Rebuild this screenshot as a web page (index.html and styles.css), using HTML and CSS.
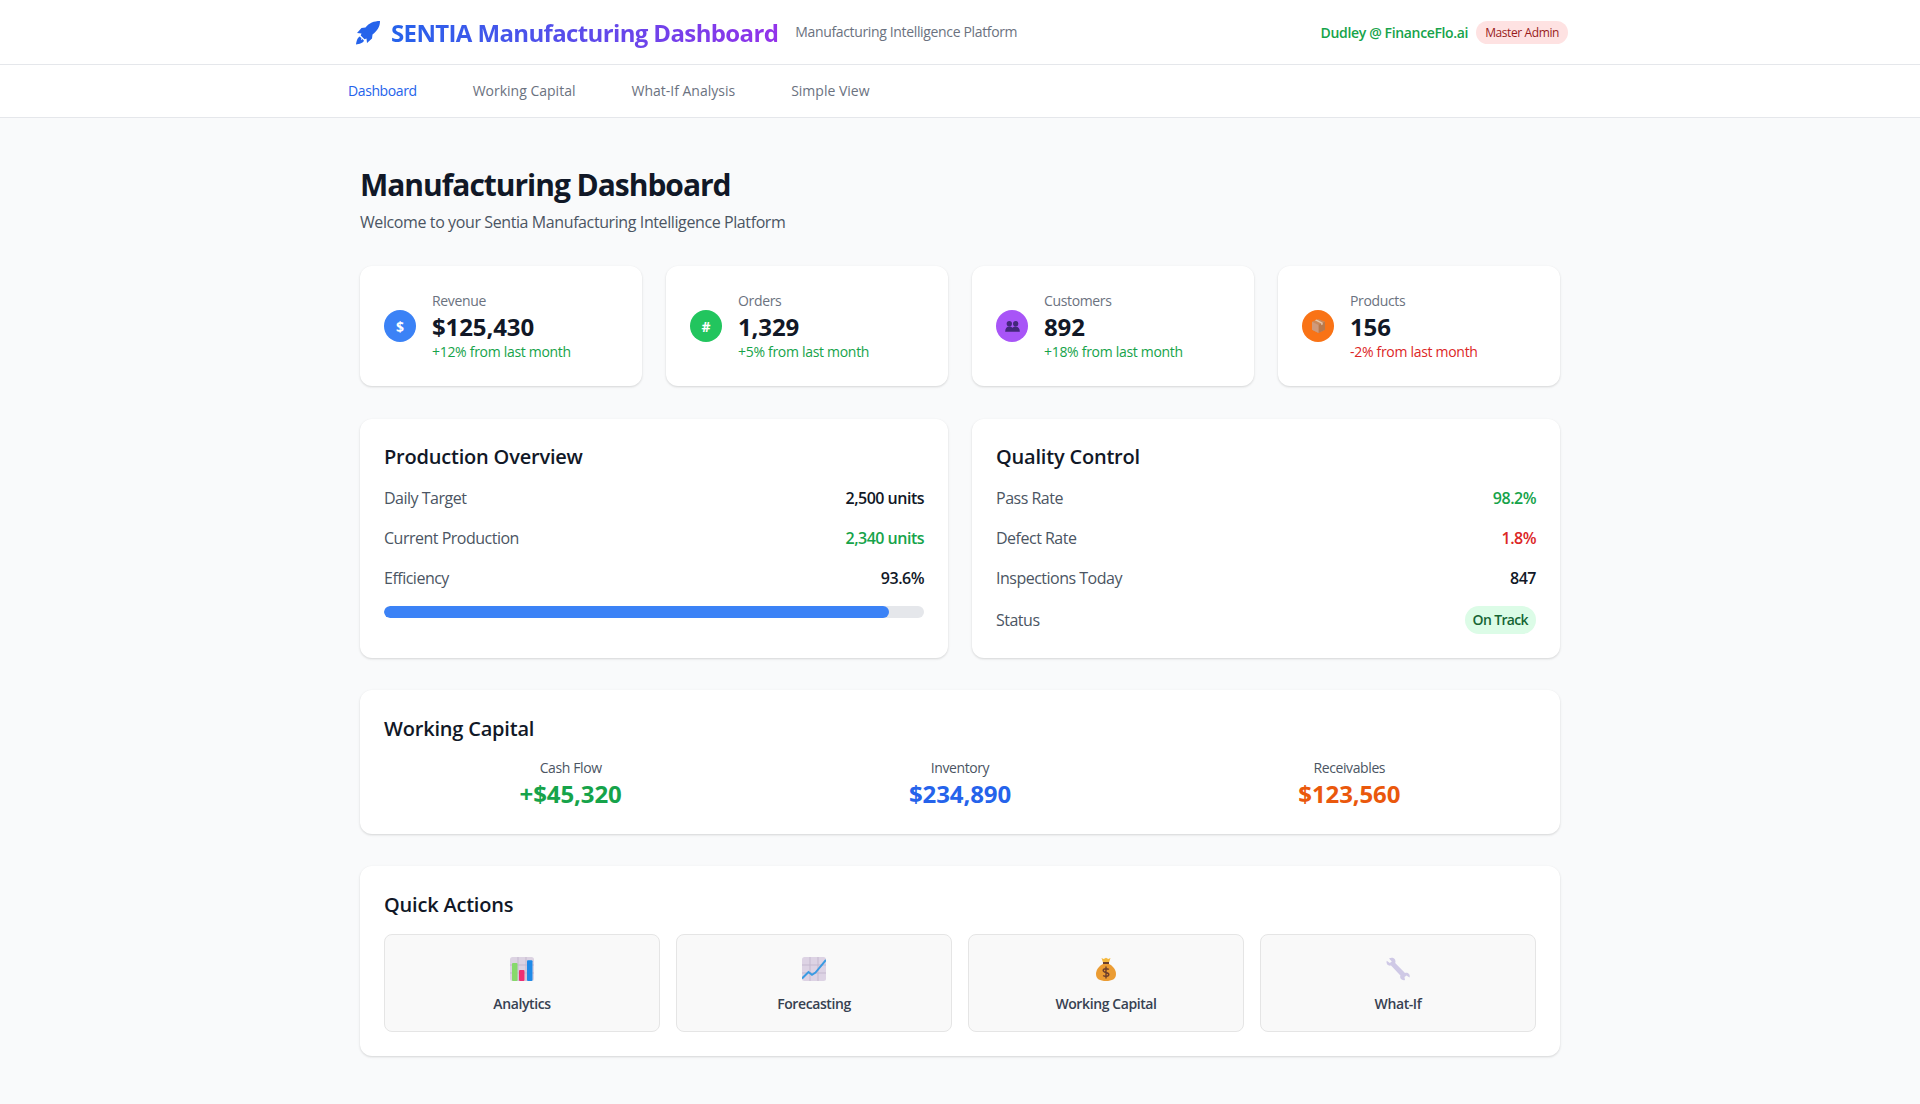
FILE: index.html
```html
<!DOCTYPE html>
<html lang="en">
<head>
    <meta charset="UTF-8">
    <title>SENTIA Manufacturing Dashboard</title>
    <link rel="stylesheet" href="styles.css">
</head>
<body>
    <header class="topbar">
        <div class="topbar-inner">
            <div class="brand">
                <svg class="rocket" viewBox="0 0 26 24"><path d="M25 0C19 0 14 2 10.500 6.500L6.500 7 2 12l4.500.5-.8 2 3.800 3.800 2-.8.500 4.500 5-4.500.5-4C22 10 25 6 25 0z"/><path d="M4.800 15.500C2.500 16.500 1.500 20 1 23.500c3.500-.5 7-1.500 8-3.800l-1.500-1.700-1.500 1.200.5-2z"/></svg>
                <span class="brand-title">SENTIA Manufacturing Dashboard</span>
                <span class="brand-sub">Manufacturing Intelligence Platform</span>
            </div>
            <div class="user">
                <span class="user-name">Dudley @ FinanceFlo.ai</span>
                <span class="user-role">Master Admin</span>
            </div>
        </div>
    </header>

    <nav class="tabs">
        <div class="tabs-inner">
            <a class="tab active">Dashboard</a>
            <a class="tab">Working Capital</a>
            <a class="tab">What-If Analysis</a>
            <a class="tab">Simple View</a>
        </div>
    </nav>

    <main class="main">
        <h1>Manufacturing Dashboard</h1>
        <p class="welcome">Welcome to your Sentia Manufacturing Intelligence Platform</p>

        <section class="stats">
            <div class="card stat">
                <div class="stat-icon blue">$</div>
                <div>
                    <div class="stat-label">Revenue</div>
                    <div class="stat-value">$125,430</div>
                    <div class="stat-change up">+12% from last month</div>
                </div>
            </div>
            <div class="card stat">
                <div class="stat-icon green">#</div>
                <div>
                    <div class="stat-label">Orders</div>
                    <div class="stat-value">1,329</div>
                    <div class="stat-change up">+5% from last month</div>
                </div>
            </div>
            <div class="card stat">
                <div class="stat-icon purple">
                    <svg width="15" height="11" viewBox="0 0 16 12" fill="#43287a"><circle cx="4.500" cy="3" r="2.900"/><circle cx="11.500" cy="3" r="2.900"/><path d="M0 11.800C0 8 2 6 4.500 6c1.400 0 2.600.5 3.500 1.300C8.900 6.500 10.100 6 11.500 6 14 6 16 8 16 11.800z"/></svg>
                </div>
                <div>
                    <div class="stat-label">Customers</div>
                    <div class="stat-value">892</div>
                    <div class="stat-change up">+18% from last month</div>
                </div>
            </div>
            <div class="card stat">
                <div class="stat-icon orange">
                    <svg width="13" height="14" viewBox="0 0 14 15"><path d="M7 0l7 3v8.500L7 15 0 11.500V3z" fill="#c98a5e"/><path d="M7 6.500L14 3v8.500L7 15z" fill="#b8794c"/><path d="M0 3l7 3.500V15L0 11.500z" fill="#cf9a7c"/><path d="M3 1.400l7 3.300v2l1.500-.7v-2L5 .6z" fill="#e6c8ac"/></svg>
                </div>
                <div>
                    <div class="stat-label">Products</div>
                    <div class="stat-value">156</div>
                    <div class="stat-change down">-2% from last month</div>
                </div>
            </div>
        </section>

        <section class="panels">
            <div class="card panel">
                <h2>Production Overview</h2>
                <div class="row"><span>Daily Target</span><b>2,500 units</b></div>
                <div class="row"><span>Current Production</span><b class="up">2,340 units</b></div>
                <div class="row"><span>Efficiency</span><b>93.6%</b></div>
                <div class="progress"><div class="progress-fill" style="width: 93.6%"></div></div>
            </div>
            <div class="card panel">
                <h2>Quality Control</h2>
                <div class="row"><span>Pass Rate</span><b class="up">98.2%</b></div>
                <div class="row"><span>Defect Rate</span><b class="down">1.8%</b></div>
                <div class="row"><span>Inspections Today</span><b>847</b></div>
                <div class="row"><span>Status</span><b class="pill">On Track</b></div>
            </div>
        </section>

        <section class="card panel capital">
            <h2>Working Capital</h2>
            <div class="capital-grid">
                <div><div class="capital-label">Cash Flow</div><div class="capital-value up">+$45,320</div></div>
                <div><div class="capital-label">Inventory</div><div class="capital-value blue-text">$234,890</div></div>
                <div><div class="capital-label">Receivables</div><div class="capital-value orange-text">$123,560</div></div>
            </div>
        </section>

        <section class="card panel actions">
            <h2>Quick Actions</h2>
            <div class="action-grid">
                <div class="action">
                    <svg class="action-icon" viewBox="0 0 24 24"><rect width="24" height="24" rx="2.500" fill="#dcd3e2"/><path d="M0 8h24M0 16h24M8 0v24M16 0v24" stroke="#c5b9cf" stroke-width="1"/><rect x="2" y="6" width="5.500" height="18" rx="1" fill="#86d96b"/><rect x="9" y="13" width="5.500" height="11" rx="1" fill="#ee2f72"/><rect x="17" y="3.300" width="5.500" height="20.700" rx="1" fill="#1f8ae8"/></svg>
                    <span>Analytics</span>
                </div>
                <div class="action">
                    <svg class="action-icon" viewBox="0 0 24 24"><rect width="24" height="24" rx="2.500" fill="#ddd3e4"/><path d="M0 8h24M0 16h24M8 0v24M16 0v24" stroke="#c5b9cf" stroke-width="1"/><path d="M0 21.500l6.500-6.500 3.500 2.800 3.500-2.200L24 3" fill="none" stroke="#3a9be2" stroke-width="2"/></svg>
                    <span>Forecasting</span>
                </div>
                <div class="action">
                    <svg class="action-icon" viewBox="0 0 24 24"><path d="M7.500 1l2.200 1L12 .8 14.300 2l2.200-1-1.500 4.500H9z" fill="#f5b93f"/><rect x="9" y="5" width="6" height="2" fill="#6a4030"/><path d="M9 7C5 9 2 13 2 17c0 5 4 7 10 7s10-2 10-7c0-4-3-8-7-10z" fill="#eb9c33"/><path d="M12 9.500v12M14.800 12.500c-1.200-1.200-5.600-1.200-5.600 1 0 2.500 5.600 1.500 5.600 4 0 2.200-4.400 2.200-5.600 1" fill="none" stroke="#6e3f2c" stroke-width="1.400"/></svg>
                    <span>Working Capital</span>
                </div>
                <div class="action">
                    <svg class="action-icon" viewBox="0 0 24 24"><path d="M3 1.500c2-1 5-1 6 1 .6 1.200.6 2.500.2 3.500l9.800 10c1.200-.4 3-.3 4 1 .8 1 1 2.500.5 3.500l-3-2-2 1.500.5 3c-1.500.5-3.300 0-4.200-1.200-.8-1.100-.8-2.300-.4-3.300L5 8.500c-1.300.3-2.800.1-3.700-1C.5 6.500.3 5 .8 3.800l3 2.200 2-1.600z" fill="#cfc9e6"/></svg>
                    <span>What-If</span>
                </div>
            </div>
        </section>
    </main>
</body>
</html>
```

FILE: styles.css
```css
* {
    box-sizing: border-box;
}

body {
    margin: 0;
    min-height: 1104px;
    background-color: #f9fafb;
    color: #111827;
    font-family: "Open Sans", "Noto Sans", sans-serif;
}

.card {
    background-color: #fff;
    border-radius: 12px;
    box-shadow: 0 1px 3px rgba(0, 0, 0, 0.1), 0 1px 2px rgba(0, 0, 0, 0.06);
}

.up {
    color: #16a34a;
}

.down {
    color: #dc2626;
}

/* header */
.topbar {
    height: 65px;
    background-color: #fff;
    border-bottom: 1px solid #e5e7eb;
}

.topbar-inner {
    width: 1216px;
    height: 64px;
    margin-left: 352px;
    padding-left: 3px;
    display: flex;
    align-items: center;
    justify-content: space-between;
}

.brand {
    display: flex;
    align-items: center;
}

.rocket {
    width: 26px;
    height: 24px;
    fill: #2563eb;
    margin: 2px 10px 0 0;
}

.brand-title {
    margin-top: 2px;
    font-size: 24px;
    font-weight: 700;
    letter-spacing: -0.63px;
    line-height: 32px;
    background: linear-gradient(90deg, #2563eb, #9333ea);
    -webkit-background-clip: text;
    background-clip: text;
    color: transparent;
}

.brand-sub {
    margin: -1px 0 0 17px;
    font-size: 14px;
    letter-spacing: -0.35px;
    color: #6b7280;
}

.user {
    display: flex;
    align-items: center;
    gap: 8px;
}

.user-name {
    font-size: 14px;
    font-weight: 600;
    letter-spacing: -0.35px;
    color: #16a34a;
}

.user-role {
    padding: 3px 9px;
    border-radius: 999px;
    background-color: #fee2e2;
    color: #991b1b;
    font-size: 12px;
    letter-spacing: -0.4px;
}

/* nav */
.tabs {
    height: 53px;
    background-color: #fff;
    border-bottom: 1px solid #e5e7eb;
}

.tabs-inner {
    margin-left: 348px;
    height: 50px;
    display: flex;
    align-items: center;
    gap: 56px;
}

.tab {
    font-size: 14px;
    font-weight: 500;
    color: #6b7280;
}

.tab.active {
    letter-spacing: -0.4px;
    color: #2563eb;
}

/* main */
.main {
    width: 1200px;
    margin: 0 auto;
    padding-top: 49px;
}

h1 {
    margin: 0;
    font-size: 30px;
    font-weight: 700;
    line-height: 36px;
    letter-spacing: -1.03px;
}

.welcome {
    margin: 7px 0 0;
    font-size: 16px;
    line-height: 24px;
    letter-spacing: -0.4px;
    color: #4b5563;
}

.stats {
    display: grid;
    grid-template-columns: repeat(4, 1fr);
    gap: 24px;
    margin-top: 32px;
}

.stat {
    height: 120px;
    padding: 0 24px;
    display: flex;
    align-items: center;
    gap: 16px;
}

.stat-icon {
    width: 32px;
    height: 32px;
    border-radius: 50%;
    display: flex;
    align-items: center;
    justify-content: center;
    color: #fff;
    font-size: 14px;
    font-weight: 700;
}

.stat-icon.blue {
    background-color: #3b82f6;
}

.stat-icon.green {
    background-color: #22c55e;
}

.stat-icon.purple {
    background-color: #a855f7;
}

.stat-icon.orange {
    background-color: #f97316;
}

.stat-label {
    margin-top: -1px;
    font-size: 14px;
    font-weight: 500;
    line-height: 20px;
    letter-spacing: -0.35px;
    color: #6b7280;
}

.stat-value {
    font-size: 24px;
    font-weight: 700;
    line-height: 32px;
    letter-spacing: -0.1px;
}

.stat-change {
    font-size: 14px;
    line-height: 18px;
    letter-spacing: -0.3px;
}

.panels {
    display: grid;
    grid-template-columns: repeat(2, 1fr);
    gap: 24px;
    margin-top: 33px;
}

.panel {
    padding: 24px;
}

h2 {
    margin: 0 0 15px;
    font-size: 20px;
    font-weight: 600;
    line-height: 28px;
    letter-spacing: -0.2px;
}

.row {
    display: flex;
    align-items: center;
    justify-content: space-between;
    min-height: 24px;
    margin-bottom: 16px;
    font-size: 16px;
    letter-spacing: -0.5px;
    color: #4b5563;
}

.row:last-child {
    margin-bottom: 0;
}

.row b {
    font-weight: 600;
    color: #111827;
}

.row b.up {
    color: #16a34a;
}

.row b.down {
    color: #dc2626;
}

.row b.pill {
    padding: 4px 8px;
    border-radius: 999px;
    background-color: #dcfce7;
    color: #166534;
    font-size: 14px;
    line-height: 20px;
    letter-spacing: -0.65px;
}

.progress {
    height: 12px;
    border-radius: 6px;
    background-color: #e5e7eb;
    overflow: hidden;
}

.progress-fill {
    height: 100%;
    border-radius: 6px;
    background-color: #3b82f6;
}

.capital {
    margin-top: 32px;
    padding-top: 25px;
    height: 144px;
}

.capital-grid {
    display: grid;
    grid-template-columns: repeat(3, 1fr);
    gap: 16px;
    text-align: center;
}

.capital-label {
    font-size: 14px;
    line-height: 20px;
    letter-spacing: -0.4px;
    color: #4b5563;
}

.capital-value {
    font-size: 24px;
    font-weight: 700;
    line-height: 32px;
    letter-spacing: -0.1px;
}

.blue-text {
    color: #2563eb;
}

.orange-text {
    color: #ea580c;
}

.actions {
    margin-top: 32px;
    padding-top: 25px;
}

.action-grid {
    display: grid;
    grid-template-columns: repeat(4, 1fr);
    gap: 16px;
    margin-top: 13px;
}

.action {
    height: 98px;
    padding-top: 22px;
    border: 1px solid #e5e5e5;
    border-radius: 8px;
    background-color: #f9f9f9;
    display: flex;
    flex-direction: column;
    align-items: center;
    font-size: 14px;
    font-weight: 600;
    letter-spacing: -0.4px;
    color: #374151;
}

.action-icon {
    width: 24px;
    height: 24px;
    margin-bottom: 13px;
}
```
